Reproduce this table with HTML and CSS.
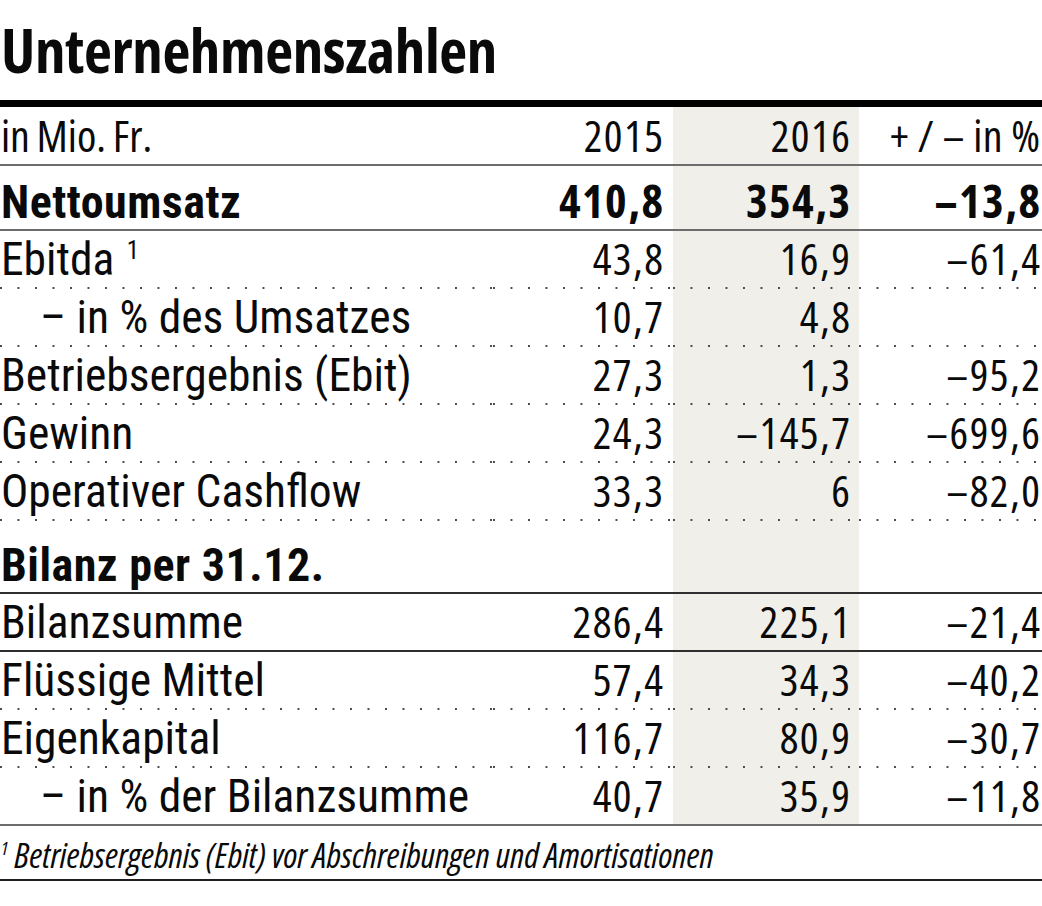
FILE: index.html
```html
<!DOCTYPE html>
<html lang="de">
<head>
<meta charset="utf-8">
<title>Unternehmenszahlen</title>
<link rel="stylesheet" href="styles.css">
</head>
<body>
<div class="card">
  <h1 class="title">Unternehmenszahlen</h1>
  <div class="table">
    <div class="row head solid">
      <div class="cell label"><span>in Mio. Fr.</span></div>
      <div class="cell num"><span>2015</span></div>
      <div class="cell num shade"><span>2016</span></div>
      <div class="cell num last"><span>+ / – in %</span></div>
    </div>
    <div class="row bold big solid">
      <div class="cell label"><span>Nettoumsatz</span></div>
      <div class="cell num"><span>410,8</span></div>
      <div class="cell num shade"><span>354,3</span></div>
      <div class="cell num last"><span>–13,8</span></div>
    </div>
    <div class="row dotted">
      <div class="cell label"><span>Ebitda <sup class="sup">1</sup></span></div>
      <div class="cell num"><span>43,8</span></div>
      <div class="cell num shade"><span>16,9</span></div>
      <div class="cell num last"><span>–61,4</span></div>
    </div>
    <div class="row dotted">
      <div class="cell label indent"><span>– in % des Umsatzes</span></div>
      <div class="cell num"><span>10,7</span></div>
      <div class="cell num shade"><span>4,8</span></div>
      <div class="cell num last"></div>
    </div>
    <div class="row dotted">
      <div class="cell label"><span>Betriebsergebnis (Ebit)</span></div>
      <div class="cell num"><span>27,3</span></div>
      <div class="cell num shade"><span>1,3</span></div>
      <div class="cell num last"><span>–95,2</span></div>
    </div>
    <div class="row dotted">
      <div class="cell label"><span>Gewinn</span></div>
      <div class="cell num"><span>24,3</span></div>
      <div class="cell num shade"><span>–145,7</span></div>
      <div class="cell num last"><span>–699,6</span></div>
    </div>
    <div class="row dotted">
      <div class="cell label"><span>Operativer Cashflow</span></div>
      <div class="cell num"><span>33,3</span></div>
      <div class="cell num shade"><span>6</span></div>
      <div class="cell num last"><span>–82,0</span></div>
    </div>
    <div class="row bold section solid dark">
      <div class="cell label"><span>Bilanz per 31.12.</span></div>
      <div class="cell num"></div>
      <div class="cell num shade"></div>
      <div class="cell num last"></div>
    </div>
    <div class="row solid dark">
      <div class="cell label"><span>Bilanzsumme</span></div>
      <div class="cell num"><span>286,4</span></div>
      <div class="cell num shade"><span>225,1</span></div>
      <div class="cell num last"><span>–21,4</span></div>
    </div>
    <div class="row dotted">
      <div class="cell label"><span>Flüssige Mittel</span></div>
      <div class="cell num"><span>57,4</span></div>
      <div class="cell num shade"><span>34,3</span></div>
      <div class="cell num last"><span>–40,2</span></div>
    </div>
    <div class="row dotted">
      <div class="cell label"><span>Eigenkapital</span></div>
      <div class="cell num"><span>116,7</span></div>
      <div class="cell num shade"><span>80,9</span></div>
      <div class="cell num last"><span>–30,7</span></div>
    </div>
    <div class="row solid">
      <div class="cell label indent"><span>– in % der Bilanzsumme</span></div>
      <div class="cell num"><span>40,7</span></div>
      <div class="cell num shade"><span>35,9</span></div>
      <div class="cell num last"><span>–11,8</span></div>
    </div>
  </div>
  <p class="footnote"><sup class="fsup">1</sup> Betriebsergebnis (Ebit) vor Abschreibungen und Amortisationen</p>
</div>
</body>
</html>
```
FILE: styles.css
```css
html, body {
  margin: 0;
  padding: 0;
  background: #ffffff;
}

.card {
  width: 1042px;
  color: #0a0a0a;
  font-family: "Open Sans", "DejaVu Sans", sans-serif;
}

.title {
  margin: 0;
  height: 107px;
  box-sizing: border-box;
  padding: 0 0 0 1px;
  font-size: 61px;
  font-weight: 700;
  font-stretch: 75%;
  line-height: 100px;
  letter-spacing: -0.4px;
  border-bottom: 7px solid #000;
  white-space: nowrap;
}

.table {
  display: flex;
  flex-direction: column;
}

.row {
  display: grid;
  grid-template-columns: minmax(0, 1fr) 180px 186px 183px;
  height: 58px;
  box-sizing: border-box;
  line-height: 44px;
}

.row.solid {
  border-bottom: 2px solid #6c6c6c;
}

.row.solid.dark {
  border-bottom-color: #2e2e2e;
}

.row.head {
  height: 59px;
}

.row.big {
  height: 65px;
}

.row.section {
  height: 73px;
}

.cell {
  display: flex;
  align-items: flex-end;
  padding-bottom: 7px;
  white-space: nowrap;
}

.row.dotted .cell {
  padding-bottom: 9px;
  background-image: linear-gradient(to right, #4a4a4a 2px, transparent 2px);
  background-size: 17.5px 2px;
  background-repeat: repeat-x;
  background-position: 0 100%;
}

/* labels: wider condensed face */
.label {
  padding-left: 1px;
  font-family: "Roboto Condensed", "Open Sans", sans-serif;
  font-size: 45.5px;
  font-weight: 400;
}

.row .cell.label {
  padding-bottom: 5px;
}

.row.dotted .cell.label {
  padding-bottom: 7px;
}

.row.bold .label {
  font-weight: 700;
  font-size: 46px;
  letter-spacing: 0.5px;
}

.row.head .label {
  font-family: "Open Sans", sans-serif;
  font-stretch: 75%;
  font-size: 44px;
  word-spacing: -1.5px;
  padding-bottom: 7px;
}

.label.indent {
  padding-left: 40px;
}

/* numbers */
.num {
  justify-content: flex-end;
  padding-right: 10px;
  font-family: "Open Sans", sans-serif;
  font-stretch: 75%;
  font-size: 44px;
  letter-spacing: 1.5px;
}

.num span {
  margin-right: -1.5px;
}

.row.bold .num {
  font-weight: 700;
  font-size: 46px;
}

.num.shade {
  background-color: #f0efe9;
  padding-right: 9px;
}

.num.last {
  padding-right: 2px;
}

.row.head .num.last {
  letter-spacing: 0.3px;
}

.row.head .num.last span {
  margin-right: -0.3px;
}

.sup {
  font-size: 25px;
  line-height: 1;
  vertical-align: 16px;
  margin-left: 2px;
}

.footnote {
  margin: 0;
  height: 55px;
  box-sizing: border-box;
  border-bottom: 2px solid #1e1e1e;
  font-size: 35px;
  font-style: italic;
  font-stretch: 75%;
  font-weight: 400;
  line-height: 35px;
  padding-top: 11px;
  padding-left: 1px;
  white-space: nowrap;
}

.fsup {
  font-size: 19px;
  line-height: 1;
  vertical-align: 13px;
}
```
